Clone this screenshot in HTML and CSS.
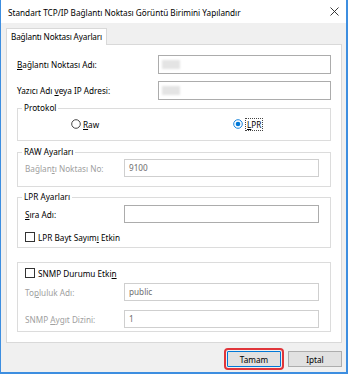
FILE: index.html
```html
<!DOCTYPE html>
<html lang="tr">

<head>
    <meta charset="UTF-8">
    <meta name="viewport" content="width=device-width, initial-scale=1.0">
    <title>Standart TCP/IP Bağlantı Noktası Görüntü Birimini Yapılandır</title>
    <link rel="stylesheet" href="styles.css">
</head>

<body>

    <div class="window">
        <header class="titlebar">
            <span class="title">Standart TCP/IP Bağlantı Noktası Görüntü Birimini Yapılandır</span>
            <svg class="close" width="9" height="9" viewBox="0 0 9 9">
                <path d="M0.5 0.5 L8.5 8.5 M8.5 0.5 L0.5 8.5" stroke="#222" stroke-width="0.9" fill="none" />
            </svg>
        </header>

        <div class="dialogBody">
            <div class="tabs">
                <div class="tab">Bağlantı Noktası Ayarları</div>
            </div>

            <div class="panel">
                <div class="row">
                    <span class="label"><u>B</u>ağlantı Noktası Adı:</span>
                    <div class="input"><span class="blot"></span></div>
                </div>
                <div class="row row-second">
                    <span class="label">Yazıcı Adı <u>v</u>eya IP Adresi:</span>
                    <div class="input"><span class="blot"></span></div>
                </div>

                <fieldset class="group group-protocol">
                    <legend>Protokol</legend>
                    <div class="radioRow">
                        <span class="radio">
                            <svg width="10" height="10" viewBox="0 0 10 10">
                                <circle cx="5" cy="5" r="4.3" fill="#fff" stroke="#333" stroke-width="0.9" />
                            </svg>
                            <span><u>R</u>aw</span>
                        </span>
                        <span class="radio">
                            <svg width="10" height="10" viewBox="0 0 10 10">
                                <circle cx="5" cy="5" r="4.3" fill="#fff" stroke="#0078d7" stroke-width="0.9" />
                                <circle cx="5" cy="5" r="2.3" fill="#0078d7" />
                            </svg>
                            <span class="focus"><u>L</u>PR</span>
                        </span>
                    </div>
                </fieldset>

                <fieldset class="group group-raw">
                    <legend>RAW Ayarları</legend>
                    <div class="groupRow">
                        <span class="label disabled">Bağlan<u>t</u>ı Noktası No:</span>
                        <div class="input disabled">9100</div>
                    </div>
                </fieldset>

                <fieldset class="group group-lpr">
                    <legend>LPR Ayarları</legend>
                    <div class="groupRow">
                        <span class="label"><u>S</u>ıra Adı:</span>
                        <div class="input"></div>
                    </div>
                    <div class="checkRow check-lpr">
                        <span class="checkbox"></span>
                        <span>LPR Bayt Sayım<u>ı</u> Etkin</span>
                    </div>
                </fieldset>

                <fieldset class="group group-snmp">
                    <div class="checkRow">
                        <span class="checkbox"></span>
                        <span>SNMP Durumu Etki<u>n</u></span>
                    </div>
                    <div class="groupRow row-community">
                        <span class="label disabled">To<u>p</u>luluk Adı:</span>
                        <div class="input disabled">public</div>
                    </div>
                    <div class="groupRow row-index">
                        <span class="label disabled">SNMP <u>A</u>ygıt Dizini:</span>
                        <div class="input disabled">1</div>
                    </div>
                </fieldset>
            </div>

            <div class="buttons">
                <button class="btn btn-ok">Tamam</button>
                <button class="btn">Iptal</button>
            </div>
        </div>
    </div>

</body>

</html>
```

FILE: styles.css
```css
* {
    margin: 0;
    padding: 0;
    box-sizing: border-box;
}

html,
body {
    width: 100%;
    height: 100%;
}

body {
    font-family: "Noto Sans", "Open Sans", sans-serif;
    font-size: 8.2px;
    color: #000;
    background: #fff;
}

u {
    text-decoration: underline;
    text-underline-offset: 1px;
}

.window {
    width: 348px;
    height: 374px;
    display: flex;
    flex-direction: column;
    border-left: 1px solid #3d8ee0;
    border-right: 2px solid #3d8ee0;
    border-bottom: 2px solid #3d8ee0;
}

.titlebar {
    height: 23px;
    flex-shrink: 0;
    display: flex;
    align-items: center;
    justify-content: space-between;
    padding: 0 7px 0 7px;
    background: #fff;
}

.title {
    line-height: 12px;
    padding-top: 2px;
}

.close {
    display: block;
}

.dialogBody {
    flex: 1;
    display: flex;
    flex-direction: column;
    background: #f0f0f0;
    padding: 5px 4px 0 5px;
}

/* tab strip */
.tabs {
    display: flex;
    height: 16px;
}

.tab {
    position: relative;
    z-index: 1;
    height: 17px;
    padding: 0 4px 0 4px;
    line-height: 15px;
    white-space: nowrap;
    letter-spacing: -0.15px;
    background: #fff;
    border: 1px solid #d9d9d9;
    border-bottom: none;
}

.panel {
    height: 299px;
    background: #fff;
    border: 1px solid #d9d9d9;
    padding: 10px 10px 0 10px;
}

.row {
    display: flex;
    align-items: center;
    height: 19px;
}

.row-second {
    margin-top: 7px;
}

.row .label {
    width: 141px;
}

.input {
    flex: 1;
    height: 19px;
    border: 1px solid #acacac;
    background: #fff;
    padding: 0 4px;
    line-height: 16px;
}

.input.disabled {
    border-color: #cfcfcf;
    color: #6d6d6d;
}

.blot {
    display: block;
    width: 18px;
    height: 9px;
    margin-top: 4px;
    margin-left: -1px;
    background: #e4e4e4;
    filter: blur(1px);
}

.label.disabled {
    color: #a0a0a0;
}

/* group boxes */
.group {
    border: 1px solid #dcdcdc;
    padding: 0 11px 0 7px;
}

.group legend {
    line-height: 12px;
    padding: 0 2px;
    margin-left: -3px;
}

.group-protocol {
    margin-top: 2px;
    padding-top: 3px;
    padding-bottom: 9px;
}

.radioRow {
    display: grid;
    grid-template-columns: 162px 1fr;
    padding-left: 46px;
    height: 14px;
}

.radio {
    display: flex;
    align-items: center;
    gap: 2px;
}

.radio svg {
    display: block;
}

.focus {
    border: 1px dotted #444;
    padding: 0 1px;
    line-height: 11px;
}

.groupRow {
    display: flex;
    align-items: center;
    height: 18px;
}

.groupRow .label {
    width: 99px;
}

.groupRow .input {
    height: 18px;
}

.group-raw {
    margin-top: 5px;
    padding-top: 1px;
    padding-bottom: 9px;
}

.group-lpr {
    margin-top: 4px;
    padding-top: 2px;
    padding-bottom: 4px;
}

.checkRow {
    display: flex;
    align-items: center;
    gap: 3px;
    height: 12px;
}

.check-lpr {
    margin-top: 8px;
}

.checkbox {
    width: 10px;
    height: 10px;
    border: 1px solid #333;
    background: #fff;
}

.group-snmp {
    margin-top: 14px;
    padding-top: 4px;
    padding-bottom: 3px;
}

.row-community {
    margin-top: 4px;
}

.row-index {
    margin-top: 9px;
}

/* bottom buttons */
.buttons {
    display: flex;
    justify-content: flex-end;
    gap: 7px;
    padding-top: 8px;
}

.btn {
    width: 54px;
    height: 16px;
    font-family: inherit;
    font-size: 8.2px;
    line-height: 13px;
    color: #000;
    background: #e1e1e1;
    border: 1px solid #adadad;
}

.btn-ok {
    border-color: #0078d7;
    outline: 2px solid #e0353a;
    outline-offset: 1px;
    border-radius: 1px;
}
```
